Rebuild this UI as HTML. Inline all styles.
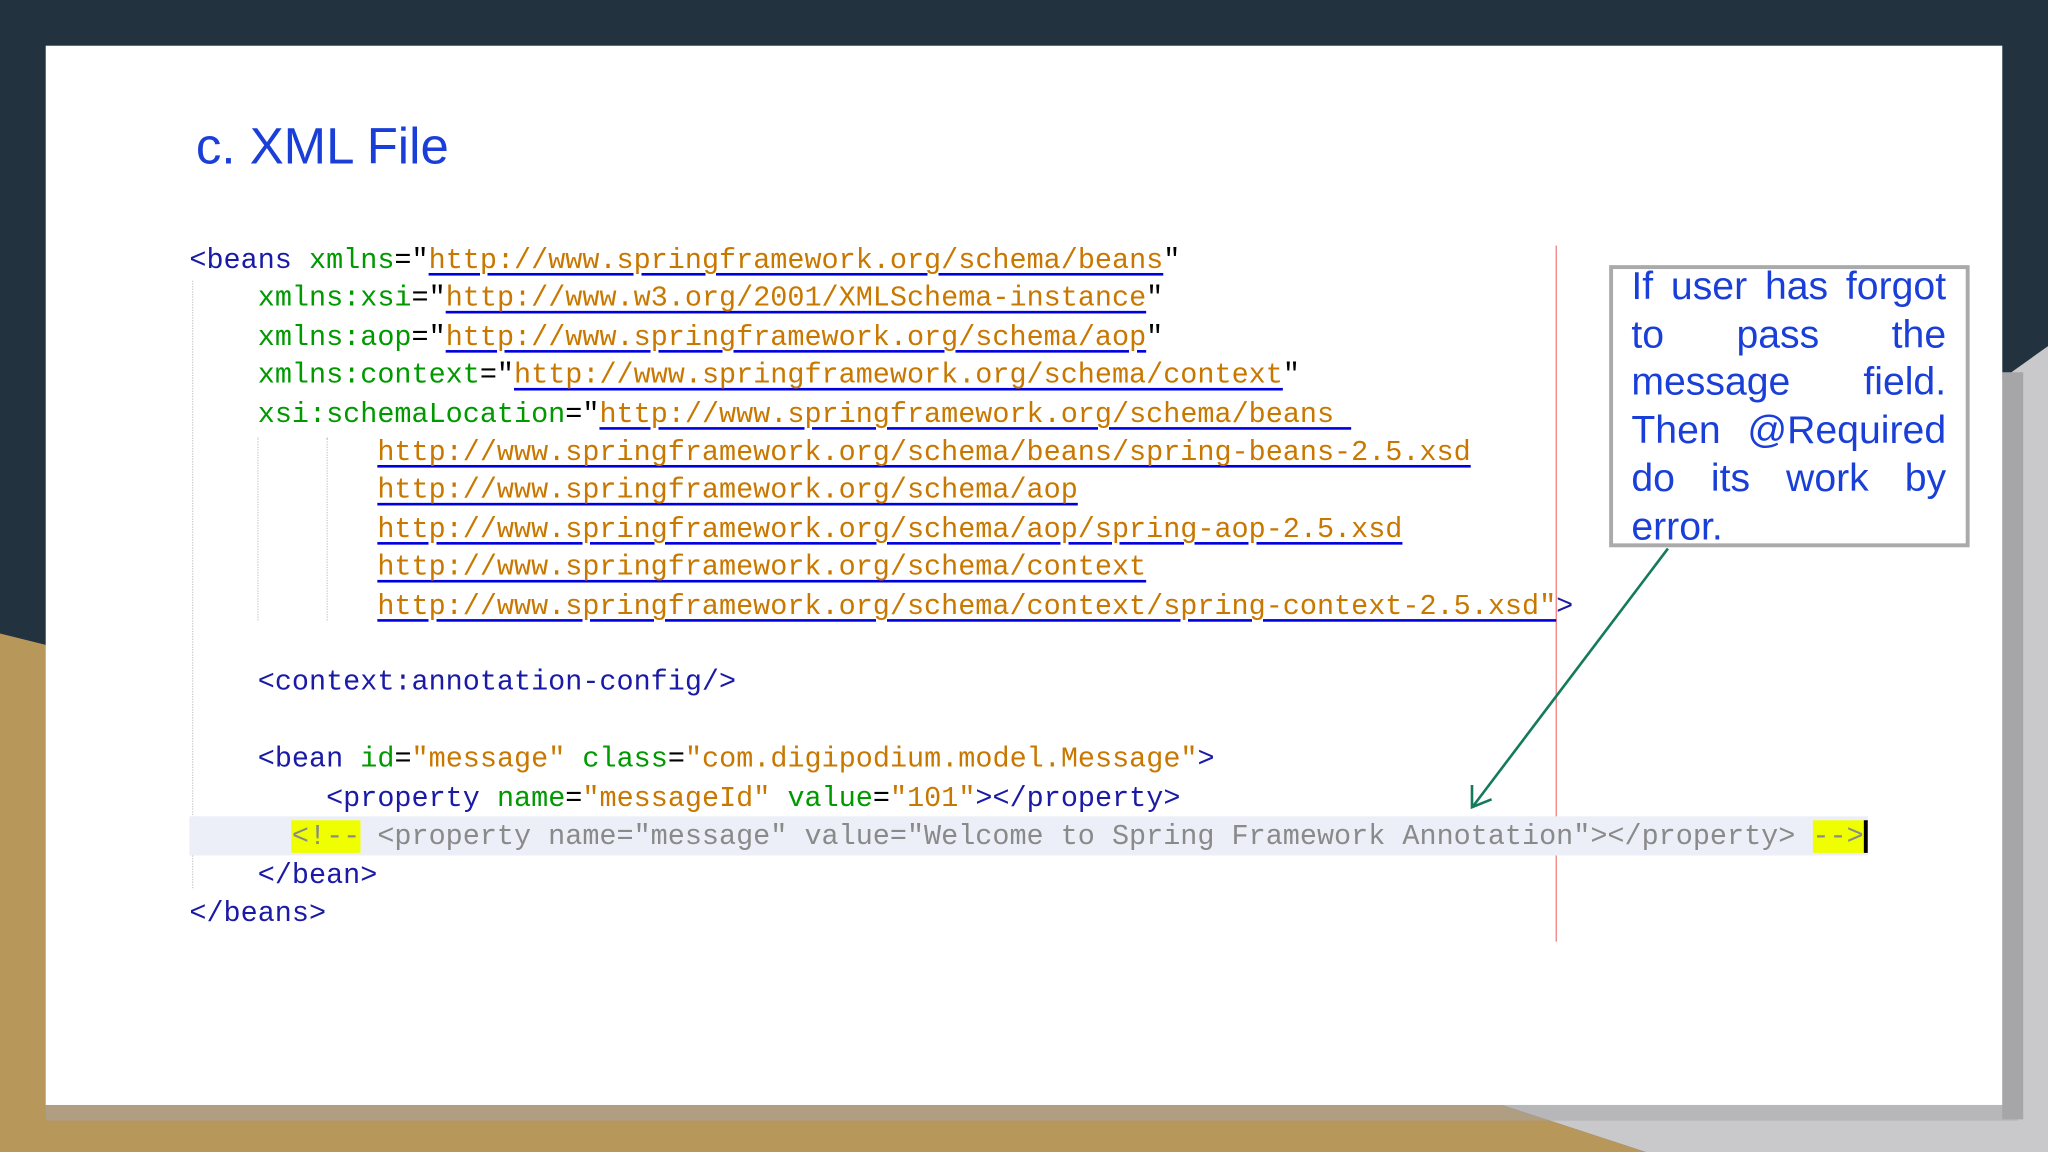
<!DOCTYPE html>
<html><head><meta charset="utf-8"><style>
html,body{margin:0;padding:0;width:2048px;height:1152px;overflow:hidden;background:#22333f}
#w{position:absolute;left:0;top:0;width:1568px;height:882px;transform:scale(1.306122);transform-origin:0 0;overflow:hidden;background:#22333f}
.abs{position:absolute}
.code{position:absolute;font-family:"Liberation Mono",monospace;font-size:21.8px;line-height:29.4px;white-space:pre;color:#000}
.t{color:#1a1aa6}.a{color:#009900}.v{color:#c87800}.u{color:#c87800;text-decoration:underline;text-decoration-color:#0000dd;text-underline-offset:4px;text-decoration-thickness:2px}
.g{color:#8a8a8a}
.y{background:#f0ff00}
</style></head><body><div id="w">
<svg class="abs" style="left:0;top:0" width="1568" height="882">
<rect x="0" y="0" width="1568" height="882" fill="#22333f"/>
<polygon points="0,485 40,495 1150,846 1260,882 0,882" fill="#b8975a"/>
<polygon points="1533,290 1568,265 1568,882 1260,882 1150,846 1533,846" fill="#c9c8cb"/>
<rect x="35" y="846" width="1510" height="12" fill="#a6a5a8" opacity="0.5"/>
<rect x="1533" y="285" width="16" height="572" fill="#a6a5a8"/>
</svg>
<div class="abs" style="left:35px;top:35px;width:1498px;height:811px;background:#fff"></div>
<div class="abs" style="left:150px;top:91px;font-family:'Liberation Sans',sans-serif;font-size:39px;color:#1a3fd8">c. XML File</div>
<div class="abs" style="left:1191px;top:188px;width:1px;height:533px;background:#f08080"></div>
<div class="abs" style="left:147px;top:215px;height:465px;border-left:1px dotted #ccc"></div>
<div class="abs" style="left:197px;top:335px;height:140px;border-left:1px dotted #ccc"></div>
<div class="abs" style="left:250px;top:335px;height:140px;border-left:1px dotted #ccc"></div>
<div class="abs" style="left:145px;top:625px;width:1285px;height:30px;background:#eceff8"></div>
<div class="code" style="left:145px;top:185px"><span class="t">&lt;beans</span> <span class="a">xmlns</span>="<span class="u">http://www.springframework.org/schema/beans</span>"
    <span class="a">xmlns:xsi</span>="<span class="u">http://www.w3.org/2001/XMLSchema-instance</span>"
    <span class="a">xmlns:aop</span>="<span class="u">http://www.springframework.org/schema/aop</span>"
    <span class="a">xmlns:context</span>="<span class="u">http://www.springframework.org/schema/context</span>"
    <span class="a">xsi:schemaLocation</span>="<span class="u">http://www.springframework.org/schema/beans </span>
           <span class="u">http://www.springframework.org/schema/beans/spring-beans-2.5.xsd</span>
           <span class="u">http://www.springframework.org/schema/aop</span>
           <span class="u">http://www.springframework.org/schema/aop/spring-aop-2.5.xsd</span>
           <span class="u">http://www.springframework.org/schema/context</span>
           <span class="u">http://www.springframework.org/schema/context/spring-context-2.5.xsd"</span><span class="t">&gt;</span>

    <span class="t">&lt;context:annotation-config/&gt;</span>

    <span class="t">&lt;bean</span> <span class="a">id</span>=<span class="v">"message"</span> <span class="a">class</span>=<span class="v">"com.digipodium.model.Message"</span><span class="t">&gt;</span>
        <span class="t">&lt;property</span> <span class="a">name</span>=<span class="v">"messageId"</span> <span class="a">value</span>=<span class="v">"101"</span><span class="t">&gt;&lt;/property&gt;</span>
      <span class="g"><span class="y">&lt;!--</span> &lt;property name="message" value="Welcome to Spring Framework Annotation"&gt;&lt;/property&gt; <span class="y">--&gt;</span></span><span style="border-left:3px solid #000"></span>
    <span class="t">&lt;/bean&gt;</span>
<span class="t">&lt;/beans&gt;</span></div>
<div class="abs" style="left:1232px;top:203px;width:270px;height:210px;border:3px solid #aaa;background:#fff"></div>
<div class="abs" style="left:1249px;top:202px;width:241px;font-family:'Liberation Sans',sans-serif;font-size:30px;line-height:36.7px;color:#1a3fd8;text-align:justify;text-align-last:left">If user has forgot to pass the message field. Then @Required do its work by error.</div>
<svg class="abs" style="left:0;top:0" width="1568" height="882">
<line x1="1277" y1="420" x2="1128" y2="617" stroke="#157a5c" stroke-width="2"/>
<polyline points="1127,601 1127,618 1142,612" fill="none" stroke="#157a5c" stroke-width="2"/>
</svg>
</div></body></html>
